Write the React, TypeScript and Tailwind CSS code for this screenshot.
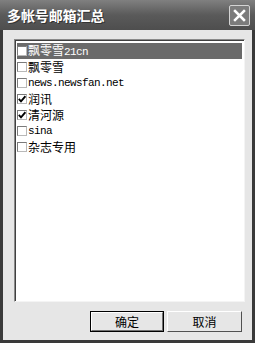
import React from "react";

const items: { label: React.ReactNode; checked: boolean; selected?: boolean }[] = [
  { label: <><span>飘零雪</span><span className="text-[11px] tracking-[-0.6px] font-['Liberation_Mono',monospace]">21cn</span></>, checked: false, selected: true },
  { label: <span>飘零雪</span>, checked: false },
  { label: <span className="text-[11px] tracking-[-0.6px] font-['Liberation_Mono',monospace]">news.newsfan.net</span>, checked: false },
  { label: <span>润讯</span>, checked: true },
  { label: <span>清河源</span>, checked: true },
  { label: <span className="text-[11px] tracking-[-0.6px] font-['Liberation_Mono',monospace]">sina</span>, checked: false },
  { label: <span>杂志专用</span>, checked: false },
];

function Box({ checked }: { checked: boolean }) {
  return (
    <div className="w-[10px] h-[10px] bg-white border border-t-[#7a7a7a] border-l-[#7a7a7a] border-b-[#b8b8b8] border-r-[#b8b8b8] flex items-center justify-center shrink-0">
      {checked && (
        <svg width="8" height="8" viewBox="0 0 8 8">
          <polyline points="0.8,3.8 3,6.3 7.4,1.2" fill="none" stroke="#000" strokeWidth="1.8" />
        </svg>
      )}
    </div>
  );
}

export default function App() {
  return (
    <div className="w-[255px] h-[343px] bg-[#3a3a3a] flex flex-col font-['Noto_Sans_CJK_SC',sans-serif] overflow-hidden">
      <div className="h-[30px] shrink-0 flex items-center justify-between pl-[7px] pr-[5px] bg-gradient-to-b from-[#808080] via-[#5a5a5a] to-[#4e4e4e]">
        <span className="text-white font-bold text-[14px] leading-[14px] tracking-[-0.1px] [text-shadow:1px_1px_0_#333]">多帐号邮箱汇总</span>
        <div className="w-[21px] h-[21px] rounded-[2px] border border-[#d4d4d4] bg-[#7c7c7c] flex items-center justify-center">
          <svg width="13" height="13" viewBox="0 0 13 13">
            <path d="M2 2 L11 11 M11 2 L2 11" stroke="#fff" strokeWidth="2.5" strokeLinecap="square" />
          </svg>
        </div>
      </div>
      <div className="flex-1 mx-[3px] mb-[3px] bg-[#e6e6e6] flex flex-col pl-[11px] pr-[7px] pt-[9px]">
        <div className="h-[263px] bg-white border border-t-[#8a8a8a] border-l-[#8a8a8a] border-b-[#f4f4f4] border-r-[#f4f4f4] shadow-[inset_1px_1px_0_#404040] pt-[3px] pl-[2px] pr-[2px] flex flex-col">
          {items.map((it, i) => (
            <div
              key={i}
              className={`h-[16px] flex items-center gap-[1px] text-[12px] leading-[16px] ${it.selected ? "bg-[#6a6a6a] text-white" : "text-black"}`}
            >
              <Box checked={it.checked} />
              <div className="flex items-baseline whitespace-nowrap">{it.label}</div>
            </div>
          ))}
        </div>
        <div className="mt-[9px] flex justify-end gap-[3px] pr-[3px]">
          <div className="w-[74px] h-[21px] border border-black flex">
            <div className="flex-1 bg-[#e6e6e6] border border-t-white border-l-white border-b-[#707070] border-r-[#707070] flex items-center justify-center text-[12px] leading-[12px] text-black">确定</div>
          </div>
          <div className="w-[75px] h-[21px] bg-[#e6e6e6] border border-t-white border-l-white border-b-[#505050] border-r-[#505050] flex items-center justify-center text-[12px] leading-[12px] text-black">取消</div>
        </div>
      </div>
    </div>
  );
}
